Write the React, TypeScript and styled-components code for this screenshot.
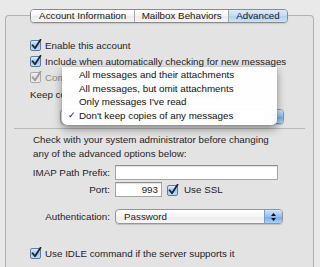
import styled, { createGlobalStyle } from "styled-components";

const GlobalStyle = createGlobalStyle`
  html, body {
    margin: 0;
    padding: 0;
    background: #e9e9e9;
  }
  body {
    font-family: "Liberation Sans", Arial, sans-serif;
    font-size: 9.8px;
    color: #1e1e1e;
  }
`;

const Page = styled.div`
  width: 320px;
  height: 267px;
  overflow: hidden;
  padding: 9px 6px 0 5px;
  box-sizing: border-box;
`;

const TabBar = styled.div`
  position: relative;
  z-index: 2;
  display: flex;
  width: 258px;
  margin: 0 0 -8px 25px;
  height: 14px;
  border: 1px solid #8a8a8a;
  border-radius: 4px;
  overflow: hidden;
  box-sizing: border-box;
  box-shadow: 0 1px 1px rgba(0, 0, 0, 0.12);
`;

const Tab = styled.div<{ $active?: boolean; $w: number }>`
  width: ${(p) => p.$w}px;
  display: flex;
  align-items: center;
  justify-content: center;
  white-space: nowrap;
  line-height: 12px;
  color: #1a1a1a;
  background: ${(p) =>
    p.$active
      ? "linear-gradient(#dcecfb, #bcdcf8 50%, #a9d2f6 51%, #c8e4fb)"
      : "linear-gradient(#ffffff, #f4f4f4 50%, #ebebeb 51%, #f3f3f3)"};
  & + & {
    border-left: 1px solid #a8a8a8;
  }
`;

const Panel = styled.div`
  position: relative;
  border: 1px solid #b2b2b2;
  border-bottom: none;
  border-radius: 4px 4px 0 0;
  background: #e3e3e3;
  height: 260px;
  padding: 21px 0 0 0;
  box-sizing: border-box;
`;

const CheckRow = styled.div<{ $disabled?: boolean }>`
  display: flex;
  align-items: center;
  height: 16px;
  padding-left: 24px;
  gap: 3px;
  color: ${(p) => (p.$disabled ? "#8a8a8a" : "#1e1e1e")};
  white-space: nowrap;
`;

const Label = styled.div`
  padding-left: 24px;
  height: 16px;
  line-height: 16px;
  margin-top: 2px;
  white-space: nowrap;
`;

const PopupRow = styled.div`
  display: flex;
  justify-content: flex-end;
  padding-right: 29px;
  margin-top: 6px;
`;

const Separator = styled.div`
  height: 1px;
  background: #b9b9b9;
  margin: 4px 8px 0 8px;
`;

const Note = styled.p`
  margin: 4px 0 0 27px;
  line-height: 14px;
  white-space: nowrap;
`;

const Form = styled.div`
  display: grid;
  grid-template-columns: 104px auto;
  column-gap: 5px;
  margin-top: 4px;
  align-items: center;
`;

const FieldLabel = styled.div<{ $gap?: number }>`
  text-align: right;
  white-space: nowrap;
  margin-top: ${(p) => p.$gap ?? 0}px;
`;

const FieldCell = styled.div<{ $gap?: number }>`
  display: flex;
  align-items: center;
  gap: 5px;
  white-space: nowrap;
  margin-top: ${(p) => p.$gap ?? 0}px;
`;

const TextField = styled.div<{ $w: number }>`
  width: ${(p) => p.$w}px;
  height: 15px;
  box-sizing: border-box;
  background: #fff;
  border: 1px solid #a5a5a5;
  border-top-color: #8d8d8d;
  box-shadow: inset 0 1px 1px rgba(0, 0, 0, 0.12);
  text-align: right;
  padding: 0 3px;
  line-height: 13px;
`;

const Popup = styled.div<{ $w: number }>`
  width: ${(p) => p.$w}px;
  height: 15px;
  box-sizing: border-box;
  display: flex;
  border: 1px solid #959595;
  border-radius: 4px;
  overflow: hidden;
  background: linear-gradient(#ffffff, #f5f5f5 50%, #ececec 51%, #f6f6f6);
  box-shadow: 0 1px 1px rgba(0, 0, 0, 0.15);
`;

const PopupText = styled.div`
  flex: 1;
  padding-left: 8px;
  line-height: 13px;
  white-space: nowrap;
  overflow: hidden;
`;

const PopupCap = styled.div`
  width: 17px;
  border-left: 1px solid #7d9cc4;
  background: linear-gradient(#cfe4fb, #91c0f1 50%, #6eaaeb 51%, #a8d2f8);
  display: flex;
  align-items: center;
  justify-content: center;
`;

const IdleRow = styled(CheckRow)`
  margin-top: 21px;
`;

const Menu = styled.div`
  position: absolute;
  left: 56px;
  top: 51px;
  width: 215px;
  height: 58px;
  box-sizing: border-box;
  padding-top: 1px;
  background: rgba(255, 255, 255, 0.97);
  border-radius: 0 0 5px 5px;
  box-shadow: 0 4px 9px rgba(0, 0, 0, 0.4), 0 0 1px rgba(0, 0, 0, 0.3);
  z-index: 3;
`;

const MenuItem = styled.div`
  display: flex;
  height: 13.5px;
  line-height: 13.5px;
  white-space: nowrap;
  color: #111;
`;

const Mark = styled.span`
  width: 17px;
  padding-left: 6px;
  box-sizing: border-box;
  font-size: 9px;
`;

const MarkGap = styled.span`
  width: 17px;
`;

const CheckBox = ({ disabled }: { disabled?: boolean }) => (
  <svg width="12" height="12" viewBox="0 0 12 12">
    <defs>
      <linearGradient id={disabled ? "cbd" : "cb"} x1="0" y1="0" x2="0" y2="1">
        <stop offset="0" stopColor={disabled ? "#f2f2f2" : "#e6f1fd"} />
        <stop offset="0.5" stopColor={disabled ? "#e0e0e0" : "#9fc8f3"} />
        <stop offset="1" stopColor={disabled ? "#ebebeb" : "#c3def9"} />
      </linearGradient>
    </defs>
    <rect
      x="0.5"
      y="1.5"
      width="10"
      height="10"
      rx="1.5"
      fill={`url(#${disabled ? "cbd" : "cb"})`}
      stroke={disabled ? "#a9a9a9" : "#5f7b9e"}
    />
    <path
      d="M2.6 6.2 L5 9.2 L10.5 0.8"
      fill="none"
      stroke={disabled ? "#9a9a9a" : "#1b2436"}
      strokeWidth="1.8"
      strokeLinecap="round"
      strokeLinejoin="round"
    />
  </svg>
);

const Arrows = () => (
  <svg width="7" height="10" viewBox="0 0 7 10">
    <path d="M3.5 1 L6 4 L1 4 Z M3.5 9 L6 6 L1 6 Z" fill="#111" />
  </svg>
);

export default function App() {
  return (
    <Page>
      <GlobalStyle />
      <TabBar>
        <Tab $w={105}>Account Information</Tab>
        <Tab $w={94}>Mailbox Behaviors</Tab>
        <Tab $w={59} $active>
          Advanced
        </Tab>
      </TabBar>
      <Panel>
        <CheckRow>
          <CheckBox />
          Enable this account
        </CheckRow>
        <CheckRow>
          <CheckBox />
          Include when automatically checking for new messages
        </CheckRow>
        <CheckRow $disabled>
          <CheckBox disabled />
          Compact mailboxes automatically
        </CheckRow>
        <Label>Keep copies of messages for offline viewing:</Label>
        <PopupRow>
          <Popup $w={224}>
            <PopupText>Don't keep copies of any messages</PopupText>
            <PopupCap>
              <Arrows />
            </PopupCap>
          </Popup>
        </PopupRow>
        <Separator />
        <Note>
          Check with your system administrator before changing
          <br />
          any of the advanced options below:
        </Note>
        <Form>
          <FieldLabel>IMAP Path Prefix:</FieldLabel>
          <FieldCell>
            <TextField $w={163} />
          </FieldCell>
          <FieldLabel $gap={2}>Port:</FieldLabel>
          <FieldCell $gap={2}>
            <TextField $w={47}>993</TextField>
            <CheckBox />
            Use SSL
          </FieldCell>
          <FieldLabel $gap={12}>Authentication:</FieldLabel>
          <FieldCell $gap={12}>
            <Popup $w={168}>
              <PopupText>Password</PopupText>
              <PopupCap>
                <Arrows />
              </PopupCap>
            </Popup>
          </FieldCell>
        </Form>
        <IdleRow>
          <CheckBox />
          Use IDLE command if the server supports it
        </IdleRow>
        <Menu>
          <MenuItem>
            <MarkGap />
            All messages and their attachments
          </MenuItem>
          <MenuItem>
            <MarkGap />
            All messages, but omit attachments
          </MenuItem>
          <MenuItem>
            <MarkGap />
            Only messages I've read
          </MenuItem>
          <MenuItem>
            <Mark>✓</Mark>
            Don't keep copies of any messages
          </MenuItem>
        </Menu>
      </Panel>
    </Page>
  );
}
